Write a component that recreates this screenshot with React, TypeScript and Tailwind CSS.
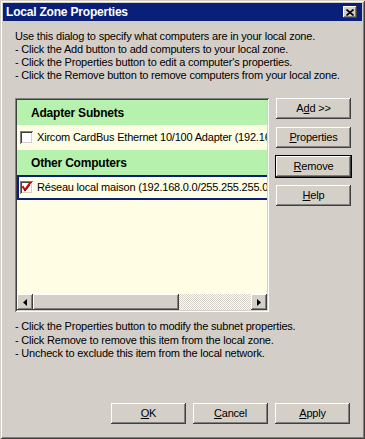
import React from 'react';

const font = { fontFamily: '"Liberation Sans", Arial, sans-serif' };

const raised =
  'shadow-[inset_-1px_-1px_#404040,inset_1px_1px_#ffffff,inset_-2px_-2px_#808080,inset_2px_2px_#d4d0c8]';
const sunken =
  'shadow-[inset_1px_1px_#808080,inset_-1px_-1px_#ffffff,inset_2px_2px_#404040,inset_-2px_-2px_#d4d0c8]';

const Btn = ({ label, u, isDefault }: { label: string; u: number; isDefault?: boolean }) => (
  <div
    className={`w-[75px] h-[21px] flex items-center justify-center bg-[#d4d0c8] text-[11px] text-black tracking-[-0.2px] ${
      isDefault
        ? 'shadow-[0_0_0_1px_#000000,inset_-1px_-1px_#404040,inset_1px_1px_#ffffff,inset_-2px_-2px_#808080,inset_2px_2px_#d4d0c8]'
        : raised
    }`}
  >
    <span>
      {label.slice(0, u)}
      <span className="underline">{label[u]}</span>
      {label.slice(u + 1)}
    </span>
  </div>
);

const CheckBox = ({ checked }: { checked?: boolean }) => (
  <div className={`w-[13px] h-[13px] bg-white shrink-0 relative ${sunken}`}>
    {checked && (
      <svg width="13" height="13" viewBox="0 0 13 13" className="absolute left-0 top-0">
        <path d="M3 6 L5 9 L10 2" stroke="#e00000" strokeWidth="2" fill="none" strokeLinecap="square" />
        <path d="M4 9 L5 10 L10 4" stroke="#800000" strokeWidth="1" fill="none" />
      </svg>
    )}
  </div>
);

const ArrowBtn = ({ dir }: { dir: 'left' | 'right' }) => (
  <div className={`w-[16px] h-[16px] bg-[#d4d0c8] flex items-center justify-center shrink-0 ${raised}`}>
    <svg width="4" height="7" viewBox="0 0 4 7">
      {dir === 'left' ? <path d="M4 0 L0 3.5 L4 7 Z" fill="#000" /> : <path d="M0 0 L4 3.5 L0 7 Z" fill="#000" />}
    </svg>
  </div>
);

export default function App() {
  return (
    <div
      style={font}
      className="w-[365px] h-[439px] bg-[#d3cfc8] shadow-[inset_1px_1px_#d4d0c8,inset_-1px_-1px_#404040,inset_2px_2px_#ffffff,inset_-2px_-2px_#808080] flex flex-col text-black"
    >
      {/* title bar */}
      <div className="mt-[3px] mx-[3px] h-[18px] bg-[#0a1f78] flex items-center justify-between pl-[3px] pr-[5px]">
        <span className="text-white font-bold text-[12px] tracking-[-0.2px]">Local Zone Properties</span>
        <div className={`w-[14px] h-[12px] bg-[#d4d0c8] flex items-center justify-center ${raised}`}>
          <svg width="8" height="7" viewBox="0 0 8 7">
            <path d="M0.5 0.5 L7.5 6.5 M7.5 0.5 L0.5 6.5" stroke="#000" strokeWidth="1.6" />
          </svg>
        </div>
      </div>

      <div className="pl-[15px] pt-[9px] text-[11px] leading-[13px] tracking-[-0.2px]">
        <p>Use this dialog to specify what computers are in your local zone.</p>
        <p>- Click the Add button to add computers to your local zone.</p>
        <p>- Click the Properties button to edit a computer's properties.</p>
        <p>- Click the Remove button to remove computers from your local zone.</p>
      </div>

      <div className="flex pl-[15px] mt-[16px]">
        {/* list */}
        <div className={`w-[254px] h-[214px] bg-[#fffde3] p-[2px] flex flex-col ${sunken}`}>
          <div className="flex-1 overflow-hidden text-[11px] tracking-[-0.2px]">
            <div className="w-[320px]">
              <div className="h-[25px] bg-[#b6f2ad] flex items-center pl-[14px] font-bold text-[12px]">
                Adapter Subnets
              </div>
              <div className="h-[25px] flex items-center pl-[3px] gap-[4px] whitespace-nowrap">
                <CheckBox />
                <span>Xircom CardBus Ethernet 10/100 Adapter (192.168.0.0/255.255.255.0)</span>
              </div>
              <div className="h-[25px] bg-[#b6f2ad] flex items-center pl-[14px] font-bold text-[12px]">
                Other Computers
              </div>
              <div className="h-[25px] flex items-center pl-[1px] gap-[4px] whitespace-nowrap border-2 border-[#0a1f78]">
                <CheckBox checked />
                <span>Réseau local maison (192.168.0.0/255.255.255.0)</span>
              </div>
            </div>
          </div>
          <div className="h-[16px] flex">
            <ArrowBtn dir="left" />
            <div className={`w-[146px] h-[16px] bg-[#d4d0c8] ${raised}`} />
            <div className="flex-1 bg-[repeating-conic-gradient(#d4d0c8_0_25%,#ffffff_0_50%)] bg-[length:2px_2px]" />
            <ArrowBtn dir="right" />
          </div>
        </div>

        {/* side buttons */}
        <div className="ml-[7px] flex flex-col gap-[8px]">
          <Btn label="Add >>" u={1} />
          <Btn label="Properties" u={0} />
          <Btn label="Remove" u={0} isDefault />
          <Btn label="Help" u={0} />
        </div>
      </div>

      <div className="pl-[15px] pt-[8px] text-[11px] leading-[13.5px] tracking-[-0.2px]">
        <p>- Click the Properties button to modify the subnet properties.</p>
        <p>- Click Remove to remove this item from the local zone.</p>
        <p>- Uncheck to exclude this item from the local network.</p>
      </div>

      <div className="flex-1" />

      <div className="flex justify-end gap-[7px] pr-[15px] pb-[15px]">
        <Btn label="OK" u={0} />
        <Btn label="Cancel" u={0} />
        <Btn label="Apply" u={0} />
      </div>
    </div>
  );
}
